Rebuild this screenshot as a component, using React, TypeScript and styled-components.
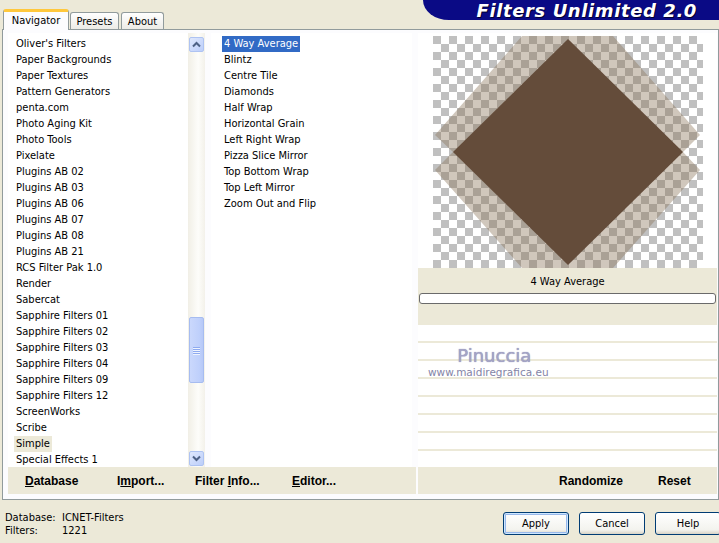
import styled, { createGlobalStyle } from 'styled-components';

const GlobalStyle = createGlobalStyle`
  *, *::before, *::after { box-sizing: border-box; }
  html, body { margin: 0; padding: 0; background: #ece9d8; }
  body {
    font-family: "DejaVu Sans Condensed", "Liberation Sans", sans-serif;
    font-size: 11px;
    color: #000;
    overflow: hidden;
  }
`;

const Window = styled.div`
  width: 719px;
  height: 543px;
  overflow: hidden;
  background: #ece9d8;
`;

const Header = styled.div`
  display: flex;
  align-items: flex-end;
  height: 29px;
  padding-left: 3px;
  position: relative;
  z-index: 1;
`;

const Tab = styled.div<{ $active?: boolean; $w: number }>`
  width: ${(p) => p.$w}px;
  height: ${(p) => (p.$active ? 21 : 17)}px;
  margin-bottom: ${(p) => (p.$active ? -1 : 0)}px;
  margin-right: ${(p) => (p.$active ? 1 : 2)}px;
  display: flex;
  align-items: center;
  justify-content: center;
  border: 1px solid #919b9c;
  border-bottom: none;
  border-top: ${(p) => (p.$active ? '3px solid #ffc83c' : '1px solid #919b9c')};
  border-radius: 3px 3px 0 0;
  background: ${(p) => (p.$active ? '#fcfcfe' : 'linear-gradient(#ffffff, #ecebe6)')};
  padding-bottom: ${(p) => (p.$active ? 1 : 0)}px;
`;

const Banner = styled.div`
  align-self: flex-start;
  margin-left: auto;
  width: 296px;
  height: 20px;
  background: #0a0a85;
  border-bottom-left-radius: 26px 20px;
  display: flex;
  justify-content: flex-end;
  align-items: center;
  padding-right: 22px;
  color: #fff;
  font-family: "DejaVu Sans", "Liberation Sans", sans-serif;
  font-weight: bold;
  font-style: italic;
  font-size: 18px;
  letter-spacing: 0.6px;
  text-shadow: 1px 1px 0 #000030;
`;

const Panel = styled.div`
  margin-left: 2px;
  width: 717px;
  height: 471px;
  border: 1px solid #919b9c;
  background: #fcfcfe;
  padding: 3px 0 0 5px;
  display: flex;
  gap: 2px;
`;

const Section = styled.div<{ $w: number }>`
  width: ${(p) => p.$w}px;
  display: flex;
  flex-direction: column;
`;

const Lists = styled.div`
  height: 434px;
  display: flex;
`;

const ListBox = styled.div<{ $w: number; $pad: number }>`
  width: ${(p) => p.$w}px;
  background: #fff;
  padding: 3px 0 0 ${(p) => p.$pad}px;
  display: flex;
  flex-direction: column;
  align-items: flex-start;
`;

const Item = styled.div<{ $sel?: 'active' | 'inactive' }>`
  height: 16px;
  line-height: 16px;
  padding: 0 2px;
  white-space: nowrap;
  background: ${(p) =>
    p.$sel === 'active' ? '#316ac5' : p.$sel === 'inactive' ? '#ece9d8' : 'transparent'};
  color: ${(p) => (p.$sel === 'active' ? '#fff' : '#000')};
`;

const Scrollbar = styled.div`
  width: 17px;
  display: flex;
  flex-direction: column;
  align-items: center;
  background: linear-gradient(90deg, #f1efe6, #fdfdfa 60%, #f3f1ea);
  padding: 4px 0 1px;
  margin-right: 6px;
`;

const ScrollButton = styled.div`
  width: 15px;
  height: 15px;
  border: 1px solid #aec3f2;
  border-radius: 2px;
  background: linear-gradient(135deg, #dfe8fd, #bccefa);
  display: flex;
  align-items: center;
  justify-content: center;
`;

const Track = styled.div`
  flex: 1;
  width: 100%;
  display: flex;
  flex-direction: column;
  align-items: center;
`;

const Thumb = styled.div<{ $top: number; $h: number }>`
  margin-top: ${(p) => p.$top}px;
  width: 15px;
  height: ${(p) => p.$h}px;
  border: 1px solid #a6bcf0;
  border-radius: 2px;
  background: linear-gradient(90deg, #cad8fc, #bfd0fb 70%, #b6c8f7);
  display: flex;
  flex-direction: column;
  align-items: center;
  justify-content: center;
  gap: 1px;
`;

const Grip = styled.div`
  width: 7px;
  height: 1px;
  background: #8eaaf0;
  box-shadow: 0 1px 0 #eef3fe;
`;

const Bar = styled.div<{ $cols: string; $pad: number }>`
  height: 27px;
  background: #ece9d8;
  display: grid;
  grid-template-columns: ${(p) => p.$cols};
  align-items: center;
  padding-left: ${(p) => p.$pad}px;
  padding-top: 1px;
  font-family: "Liberation Sans", Arial, sans-serif;
  font-weight: bold;
  font-size: 12px;
`;

const Preview = styled.div`
  height: 235px;
  background: #fff;
  display: flex;
  justify-content: center;
  padding-top: 3px;
`;

const LabelArea = styled.div`
  height: 57px;
  background: #ece9d8;
  padding: 7px 1px 0 1px;
  text-align: center;
  line-height: 14px;
`;

const Progress = styled.div`
  margin-top: 4px;
  height: 11px;
  border: 1px solid #6a6a6a;
  border-radius: 3px;
  background: #fff;
`;

const Rows = styled.div`
  height: 142px;
  background: #ece9d8;
  display: flex;
  flex-direction: column;
  gap: 2px;
  position: relative;
`;

const Row = styled.div`
  height: 16px;
  background: #fff;
`;

const Watermark = styled.div`
  position: absolute;
  left: 10px;
  top: 21px;
  display: flex;
  flex-direction: column;
  align-items: center;
  font-family: "DejaVu Sans", sans-serif;
  pointer-events: none;
`;

const MarkName = styled.span`
  font-size: 18px;
  line-height: 20px;
  color: #a4a4c6;
  text-shadow: 0 0 1px #7d7da8;
  padding-left: 12px;
`;

const MarkUrl = styled.span`
  font-size: 10.5px;
  line-height: 12px;
  color: #8484a6;
`;

const Footer = styled.div`
  display: grid;
  grid-template-columns: 498px auto;
  padding: 11px 0 0 5px;
`;

const Info = styled.div`
  display: grid;
  grid-template-columns: 57px auto;
  line-height: 13px;
`;

const Buttons = styled.div`
  display: flex;
  gap: 10px;
  margin-top: 1px;
`;

const Button = styled.div<{ $default?: boolean }>`
  width: 66px;
  height: 23px;
  flex-shrink: 0;
  border: 1px solid #003c74;
  border-radius: 3px;
  background: linear-gradient(#ffffff, #f3f3ee 80%, #d8d3c6);
  box-shadow: ${(p) =>
    p.$default ? 'inset 0 0 0 1px #cee7ff, inset 0 0 0 2px #98b8ea' : 'none'};
  display: flex;
  align-items: center;
  justify-content: center;
`;

const leftItems = [
  "Oliver's Filters",
  'Paper Backgrounds',
  'Paper Textures',
  'Pattern Generators',
  'penta.com',
  'Photo Aging Kit',
  'Photo Tools',
  'Pixelate',
  'Plugins AB 02',
  'Plugins AB 03',
  'Plugins AB 06',
  'Plugins AB 07',
  'Plugins AB 08',
  'Plugins AB 21',
  'RCS Filter Pak 1.0',
  'Render',
  'Sabercat',
  'Sapphire Filters 01',
  'Sapphire Filters 02',
  'Sapphire Filters 03',
  'Sapphire Filters 04',
  'Sapphire Filters 09',
  'Sapphire Filters 12',
  'ScreenWorks',
  'Scribe',
  'Simple',
  'Special Effects 1',
];

const filters = [
  '4 Way Average',
  'Blintz',
  'Centre Tile',
  'Diamonds',
  'Half Wrap',
  'Horizontal Grain',
  'Left Right Wrap',
  'Pizza Slice Mirror',
  'Top Bottom Wrap',
  'Top Left Mirror',
  'Zoom Out and Flip',
];

function Chevron({ up }: { up?: boolean }) {
  return (
    <svg width="9" height="7" viewBox="0 0 9 7">
      <polyline
        points={up ? '1,5.5 4.5,2 8,5.5' : '1,1.5 4.5,5 8,1.5'}
        fill="none"
        stroke="#4d6185"
        strokeWidth="2"
      />
    </svg>
  );
}

function PreviewImage() {
  return (
    <svg width="270" height="232" viewBox="0 0 270 232">
      <defs>
        <pattern id="chk" width="16" height="16" patternUnits="userSpaceOnUse">
          <rect width="16" height="16" fill="#fff" />
          <rect width="8" height="8" fill="#c0c0c0" />
          <rect x="8" y="8" width="8" height="8" fill="#c0c0c0" />
        </pattern>
      </defs>
      <rect width="270" height="232" fill="url(#chk)" />
      <polygon
        points="89,0 180,0 267,99 250,116 267,134 180,232 89,232 2,134 20,116 2,99"
        fill="#8a7358"
        fillOpacity="0.4"
      />
      <polygon points="135,3 250,116 135,229 20,116" fill="#644c3a" />
    </svg>
  );
}

export default function App() {
  return (
    <Window>
      <GlobalStyle />
      <Header>
        <Tab $active $w={66}>Navigator</Tab>
        <Tab $w={49}>Presets</Tab>
        <Tab $w={43}>About</Tab>
        <Banner>Filters Unlimited 2.0</Banner>
      </Header>

      <Panel>
        <Section $w={408}>
          <Lists>
            <ListBox $w={180} $pad={6}>
              {leftItems.map((name) => (
                <Item key={name} $sel={name === 'Simple' ? 'inactive' : undefined}>
                  {name}
                </Item>
              ))}
            </ListBox>
            <Scrollbar>
              <ScrollButton>
                <Chevron up />
              </ScrollButton>
              <Track>
                <Thumb $top={265} $h={66}>
                  <Grip />
                  <Grip />
                  <Grip />
                  <Grip />
                </Thumb>
              </Track>
              <ScrollButton>
                <Chevron />
              </ScrollButton>
            </Scrollbar>
            <ListBox $w={201} $pad={11}>
              {filters.map((name, i) => (
                <Item key={name} $sel={i === 0 ? 'active' : undefined}>
                  {name}
                </Item>
              ))}
            </ListBox>
          </Lists>
          <Bar $cols="92px 78px 97px auto" $pad={17}>
            <span><u>D</u>atabase</span>
            <span>I<u>m</u>port...</span>
            <span>Filter <u>I</u>nfo...</span>
            <span><u>E</u>ditor...</span>
          </Bar>
        </Section>

        <Section $w={299}>
          <Preview>
            <PreviewImage />
          </Preview>
          <LabelArea>
            4 Way Average
            <Progress />
          </LabelArea>
          <Rows>
            {Array.from({ length: 8 }, (_, i) => (
              <Row key={i} />
            ))}
            <Watermark>
              <MarkName>Pinuccia</MarkName>
              <MarkUrl>www.maidiregrafica.eu</MarkUrl>
            </Watermark>
          </Rows>
          <Bar $cols="99px auto" $pad={141}>
            <span>Randomize</span>
            <span>Reset</span>
          </Bar>
        </Section>
      </Panel>

      <Footer>
        <Info>
          <span>Database:</span>
          <span>ICNET-Filters</span>
          <span>Filters:</span>
          <span>1221</span>
        </Info>
        <Buttons>
          <Button $default>Apply</Button>
          <Button>Cancel</Button>
          <Button>Help</Button>
        </Buttons>
      </Footer>
    </Window>
  );
}
